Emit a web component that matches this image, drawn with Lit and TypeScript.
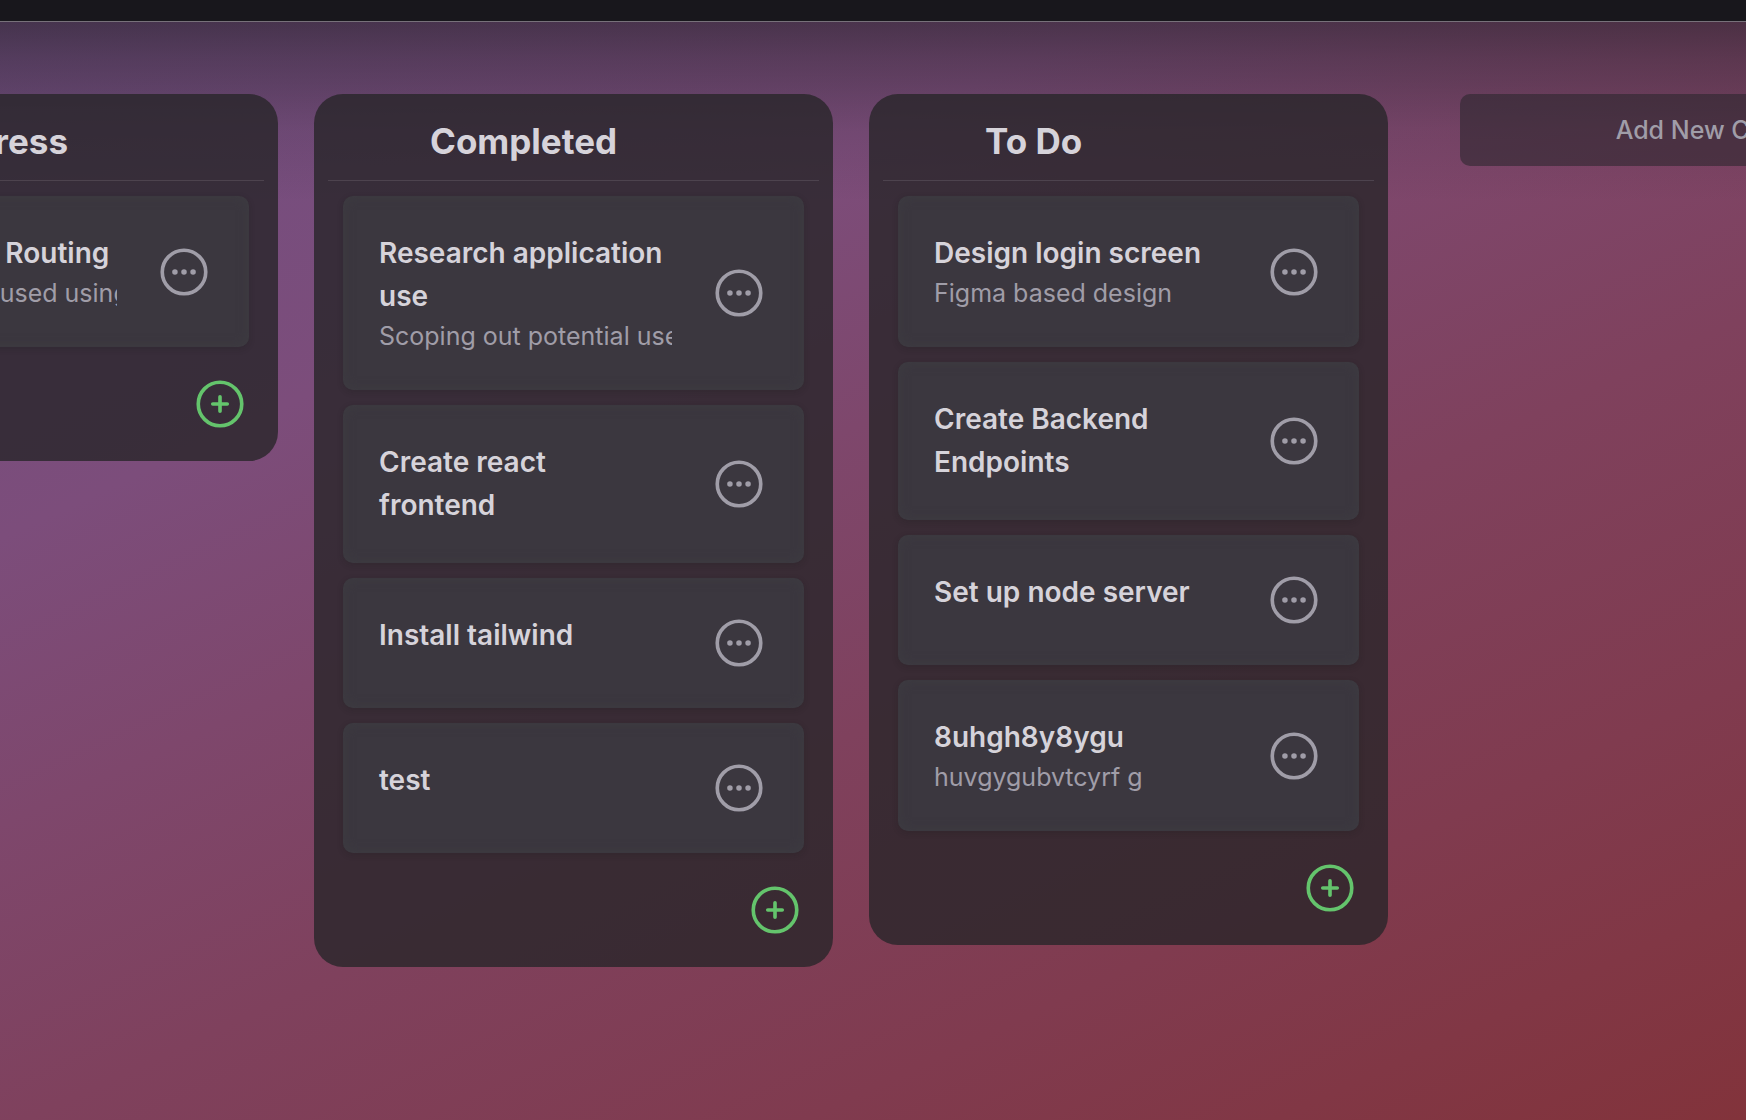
import { LitElement, html, css, svg, nothing } from "lit";
import { customElement, property } from "lit/decorators.js";

interface Task {
  title: string;
  note?: string;
}

interface Column {
  name: string;
  tasks: Task[];
}

const COLUMNS: Column[] = [
  {
    name: "In Progress",
    tasks: [{ title: "Create React Routing", note: "React-Routers used using hooks" }],
  },
  {
    name: "Completed",
    tasks: [
      { title: "Research application use", note: "Scoping out potential use cases" },
      { title: "Create react frontend" },
      { title: "Install tailwind" },
      { title: "test" },
    ],
  },
  {
    name: "To Do",
    tasks: [
      { title: "Design login screen", note: "Figma based design" },
      { title: "Create Backend Endpoints" },
      { title: "Set up node server" },
      { title: "8uhgh8y8ygu", note: "huvgygubvtcyrf g" },
    ],
  },
];

const ring = svg`<circle cx="12" cy="12" r="9" fill="none" stroke="currentColor" stroke-width="1.5" />`;

const moreIcon = html`<svg viewBox="0 0 24 24" aria-hidden="true">
  ${ring}
  <circle cx="8.25" cy="12" r="1.15" fill="currentColor" />
  <circle cx="12" cy="12" r="1.15" fill="currentColor" />
  <circle cx="15.75" cy="12" r="1.15" fill="currentColor" />
</svg>`;

const plusIcon = html`<svg viewBox="0 0 24 24" aria-hidden="true">
  ${ring}
  <path d="M12 9v6M15 12H9" fill="none" stroke="currentColor" stroke-width="1.5" stroke-linecap="round" />
</svg>`;

const iconButton = css`
  .icon-button {
    flex: none;
    display: block;
    width: 58px;
    height: 58px;
    padding: 0;
    border: 0;
    background: none;
    color: inherit;
    cursor: pointer;
  }
  .icon-button svg {
    display: block;
    width: 100%;
    height: 100%;
  }
`;

@customElement("task-card")
class TaskCard extends LitElement {
  @property({ attribute: false }) task!: Task;

  static styles = [
    iconButton,
    css`
      :host {
        display: block;
      }
      .card {
        display: flex;
        align-items: center;
        gap: 38px;
        padding: 36px;
        border-radius: 10px;
        background: #3b373f;
        box-shadow: 0 2px 6px rgba(24, 24, 27, 0.2), inset 0 0 12px rgba(63, 63, 66, 0.6);
      }
      .text {
        flex: 1;
        min-width: 0;
        align-self: flex-start;
      }
      .title {
        margin: 0;
        padding-right: 5px;
        font-size: 28px;
        line-height: 43px;
        font-weight: 600;
        color: #d6d3da;
      }
      .note {
        margin: 0;
        font-size: 25px;
        line-height: 36px;
        color: #a09da8;
        white-space: nowrap;
        overflow: hidden;
      }
      .icon-button {
        color: #a09da8;
      }
    `,
  ];

  render() {
    return html`<article class="card">
      <div class="text">
        <h3 class="title">${this.task.title}</h3>
        ${this.task.note ? html`<p class="note">${this.task.note}</p>` : nothing}
      </div>
      <button class="icon-button" aria-label="Task options">${moreIcon}</button>
    </article>`;
  }
}

@customElement("board-column")
class BoardColumn extends LitElement {
  @property({ attribute: false }) column!: Column;

  static styles = [
    iconButton,
    css`
      :host {
        display: block;
      }
      .column {
        padding: 0 14px 28px;
        border-radius: 29px;
        background: rgba(40, 38, 41, 0.8);
      }
      .name {
        margin: 0;
        padding: 26px 0 17px 102px;
        border-bottom: 1px solid #4d434e;
        font-size: 35px;
        line-height: 43px;
        font-weight: 700;
        color: #d6d3da;
      }
      .tasks {
        display: flex;
        flex-direction: column;
        gap: 15px;
        padding: 15px 15px 28px;
      }
      .footer {
        display: flex;
        justify-content: flex-end;
        padding-right: 15px;
        color: #64c46c;
      }
    `,
  ];

  render() {
    return html`<section class="column">
      <h2 class="name">${this.column.name}</h2>
      <div class="tasks">
        ${this.column.tasks.map((task) => html`<task-card .task=${task}></task-card>`)}
      </div>
      <div class="footer">
        <button class="icon-button" aria-label="Add task">${plusIcon}</button>
      </div>
    </section>`;
  }
}

@customElement("app-root")
class AppRoot extends LitElement {
  static styles = css`
    :host {
      display: flex;
      flex-direction: column;
      height: 100vh;
      overflow: hidden;
      font-family: Inter, "Liberation Sans", sans-serif;
    }
    .topbar {
      flex: none;
      height: 21px;
      border-bottom: 1px solid #77717a;
      background: #18171c;
    }
    .board {
      flex: 1;
      min-height: 0;
      display: flex;
      align-items: flex-start;
      gap: 36px;
      padding: 72px;
      overflow: auto;
      scrollbar-width: none;
      background:
        linear-gradient(rgba(30, 28, 32, 0.52), rgba(30, 28, 32, 0.36) 36px, rgba(30, 28, 32, 0.24) 72px, rgba(30, 28, 32, 0.11) 108px, rgba(30, 28, 32, 0) 180px),
        linear-gradient(155deg, #714e80, #7c4d7b 27%, #7e476c 42%, #7f415d 58%, #803b4f 77%, #82333b);
    }
    .lane {
      flex: 0 0 519px;
      min-width: 0;
    }
    .add-column {
      flex: 0 0 519px;
      height: 72px;
      margin-left: 36px;
      border: 0;
      border-radius: 10px;
      background: rgba(39, 37, 42, 0.55);
      color: #a09da8;
      font: 500 25px/36px Inter, "Liberation Sans", sans-serif;
      cursor: pointer;
    }
  `;

  firstUpdated() {
    const board = this.renderRoot.querySelector(".board");
    if (board) board.scrollLeft = 313;
  }

  render() {
    return html`
      <header class="topbar"></header>
      <main class="board">
        ${COLUMNS.map((column) => html`<board-column class="lane" .column=${column}></board-column>`)}
        <button class="add-column">Add New Column</button>
      </main>
    `;
  }
}
